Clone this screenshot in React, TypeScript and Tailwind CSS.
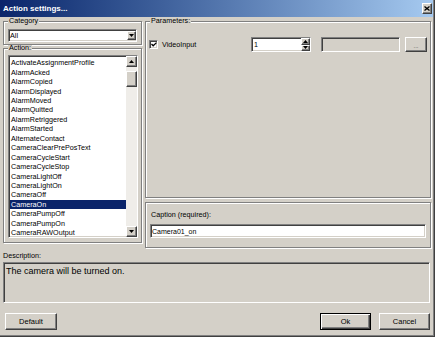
import React from "react";

const sunken =
	"border border-t-[#808080] border-l-[#808080] border-b-white border-r-white shadow-[inset_1px_1px_#404040,inset_-1px_-1px_#d4d0c8]";
const raised =
	"border border-t-white border-l-white border-b-[#404040] border-r-[#404040] shadow-[inset_-1px_-1px_#808080]";
const etched = "border border-[#808080] shadow-[inset_1px_1px_#fff,1px_1px_#fff]";

const actions = [
	"ActivateAssignmentProfile",
	"AlarmAcked",
	"AlarmCopied",
	"AlarmDisplayed",
	"AlarmMoved",
	"AlarmQuitted",
	"AlarmRetriggered",
	"AlarmStarted",
	"AlternateContact",
	"CameraClearPrePosText",
	"CameraCycleStart",
	"CameraCycleStop",
	"CameraLightOff",
	"CameraLightOn",
	"CameraOff",
	"CameraOn",
	"CameraPumpOff",
	"CameraPumpOn",
	"CameraRAWOutput",
];

function Arrow({ up = false }: { up?: boolean }) {
	return (
		<svg width="5" height="3" viewBox="0 0 5 3">
			<polygon points={up ? "2.5,0 5,3 0,3" : "0,0 5,0 2.5,3"} fill="#000" />
		</svg>
	);
}

function Group({ label, className, children }: { label: string; className: string; children: React.ReactNode }) {
	return (
		<fieldset className={`${etched} ${className}`}>
			<legend className="ml-[4px] bg-[#d4d0c8] px-px text-[7.2px] leading-[6px]">{label}</legend>
			{children}
		</fieldset>
	);
}

export default function App() {
	return (
		<div
			className="h-[337px] w-[435px] overflow-hidden bg-[#d4d0c8] text-black shadow-[inset_-1px_-1px_#404040,inset_-2px_-2px_#808080]"
			style={{ fontFamily: '"Liberation Sans", Arial, sans-serif' }}
		>
			{/* Title bar */}
			<div className="flex h-[17px] w-[433px] items-center justify-between bg-linear-to-r from-[#0a246a] to-[#a6caf0] pl-[3px] pr-px">
				<span className="text-[8px] font-bold text-white">Action settings...</span>
				<div className={`${raised} flex h-[11px] w-[10px] items-center justify-center bg-[#d4d0c8]`}>
					<svg width="6" height="5" viewBox="0 0 6 5">
						<path d="M0.5 0.5 L5.5 4.5 M5.5 0.5 L0.5 4.5" stroke="#000" strokeWidth="1.3" />
					</svg>
				</div>
			</div>

			{/* Top area */}
			<div className="flex h-[231px] items-start gap-[3px] pl-[3px] pt-px">
				<div className="flex w-[139px] flex-col">
					<Group label="Category" className="w-[139px]">
						<div className="pb-[2px] pl-[4px] pt-[5px]">
							<div className={`${sunken} flex h-[13px] w-[129px] items-center bg-white`}>
								<span className="flex-1 pl-px text-[7.2px] leading-[9px]">All</span>
								<div className={`${raised} flex h-[9px] w-[9px] items-center justify-center bg-[#d4d0c8]`}>
									<Arrow />
								</div>
							</div>
						</div>
					</Group>
					<Group label="Action:" className="w-[139px]">
						<div className="pb-[4px] pl-[4px] pt-[4px]">
							<div className={`${sunken} flex h-[183px] w-[130px] bg-white`}>
								<div className="flex-1 overflow-hidden pl-px pt-[2.3px]">
									{actions.map((a) => (
										<div
											key={a}
											className={`h-[9.45px] pl-px text-[7.2px] leading-[9.45px] whitespace-nowrap ${
												a === "CameraOn" ? "bg-[#0a246a] text-white" : ""
											}`}
										>
											{a}
										</div>
									))}
								</div>
								<div className="flex w-[11px] flex-col bg-[#efede9]">
									<div className={`${raised} flex h-[11px] items-center justify-center bg-[#d4d0c8]`}>
										<Arrow up />
									</div>
									<div className={`${raised} mt-[4px] h-[16px] bg-[#d4d0c8]`} />
									<div className="flex-1" />
									<div className={`${raised} flex h-[11px] items-center justify-center bg-[#d4d0c8]`}>
										<Arrow />
									</div>
								</div>
							</div>
						</div>
					</Group>
				</div>

				<div className="flex w-[286px] flex-col">
					<Group label="Parameters:" className="h-[180px] w-[286px]">
						<div className="mt-[13px] flex h-[15px] items-center pl-[3px]">
							<div className={`${sunken} flex h-[9px] w-[9px] items-center justify-center bg-white`}>
								<svg width="6" height="5" viewBox="0 0 6 5">
									<path d="M0.5 2 L2.2 3.8 L5.5 0.6" stroke="#000" strokeWidth="1.3" fill="none" />
								</svg>
							</div>
							<span className="ml-[4px] w-[89px] text-[7.2px] leading-[9px]">VideoInput</span>
							<div className={`${sunken} flex h-[15px] w-[60px] items-center bg-white`}>
								<span className="flex-1 pl-[2px] text-[7.2px] leading-[9px]">1</span>
								<div className="flex w-[9px] flex-col self-stretch">
									<div className={`${raised} flex flex-1 items-center justify-center bg-[#d4d0c8]`}>
										<Arrow up />
									</div>
									<div className={`${raised} flex flex-1 items-center justify-center bg-[#d4d0c8]`}>
										<Arrow />
									</div>
								</div>
							</div>
							<div className={`${sunken} ml-[10px] h-[15px] w-[79px] bg-[#d4d0c8]`} />
							<div className={`${raised} ml-[5px] flex h-[15px] w-[22px] items-end justify-center bg-[#d4d0c8] pb-[2px]`}>
								<span className="text-[6px] leading-[6px] text-[#404040]">...</span>
							</div>
						</div>
					</Group>
					<div className={`${etched} mt-[4px] flex h-[46px] flex-col pl-[4px] pt-[7px]`}>
						<span className="pl-px text-[7.2px] leading-[9px]">Caption (required):</span>
						<div className={`${sunken} mt-[5px] flex h-[14px] w-[276px] items-center bg-white`}>
							<span className="pl-px text-[7px] leading-[9px]">Camera01_on</span>
						</div>
					</div>
				</div>
			</div>

			{/* Description */}
			<div className="pl-[3px] pt-[3px]">
				<div className="text-[7.2px] leading-[9px]">Description:</div>
				<div className={`${sunken} mt-[2px] h-[41px] w-[427px] bg-[#d4d0c8] pl-[2px] pt-[3px]`}>
					<div className="text-[9px] leading-[11px]">The camera will be turned on.</div>
				</div>
			</div>

			{/* Buttons */}
			<div className="mt-[10px] flex h-[17px] pl-[5px] pr-[5px]">
				<button className={`${raised} h-[17px] w-[52px] bg-[#d4d0c8] text-[7.5px]`}>Default</button>
				<div className="flex-1" />
				<button className="h-[17px] w-[51px] border border-black bg-[#d4d0c8] text-[7.5px] shadow-[inset_1px_1px_#fff,inset_-1px_-1px_#404040,inset_-2px_-2px_#808080]">
					Ok
				</button>
				<button className={`${raised} ml-[8px] h-[17px] w-[51px] bg-[#d4d0c8] text-[7.5px]`}>Cancel</button>
			</div>
		</div>
	);
}
